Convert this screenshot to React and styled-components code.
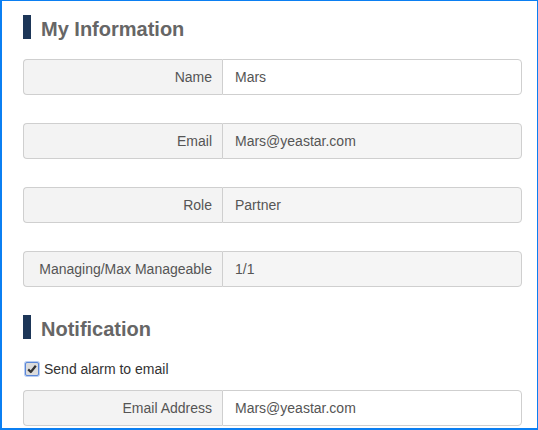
import React from 'react';
import styled, {createGlobalStyle} from 'styled-components';

const GlobalStyle = createGlobalStyle`
    html, body {
        margin: 0;
        padding: 0;
        background: #fff;
    }
    body {
        font-family: "Liberation Sans", Arial, sans-serif;
    }
`

const Frame = styled.div`
    width: 538px;
    height: 430px;
    box-sizing: border-box;
    border: 1px solid #0b7ff2;
    border-left-width: 2px;
    border-bottom-width: 2px;
    padding: 14px 15px 0 21px;
    overflow: hidden;
`

const Section = styled.section`
    display: flex;
    flex-direction: column;
`

const Title = styled.h2`
    display: flex;
    align-items: flex-end;
    gap: 10px;
    height: 24px;
    margin: 0 0 20px;
    font-size: 20px;
    line-height: 20px;
    font-weight: bold;
    color: #666;
    &::before {
        content: '';
        align-self: stretch;
        width: 8px;
        background: #1d3658;
    }
`

const Rows = styled.div`
    display: flex;
    flex-direction: column;
    gap: 28px;
    margin-bottom: 28px;
`

const Field = styled.div`
    display: flex;
    height: 36px;
    font-size: 14px;
    color: #555;
`

const Label = styled.div`
    flex: 0 0 199px;
    box-sizing: border-box;
    display: flex;
    align-items: center;
    justify-content: flex-end;
    padding-right: 10px;
    background: #f3f3f3;
    border: 1px solid #cfcfcf;
    border-right: none;
    border-radius: 4px 0 0 4px;
    white-space: nowrap;
`

const Value = styled.div`
    flex: 1;
    box-sizing: border-box;
    display: flex;
    align-items: center;
    padding-left: 12px;
    background: ${p => (p.disabled ? '#f5f5f5' : '#fff')};
    border: 1px solid #cfcfcf;
    border-radius: 0 4px 4px 0;
`

const Check = styled.label`
    display: flex;
    align-items: center;
    gap: 5px;
    height: 16px;
    margin: 2px 0 13px;
    font-size: 14px;
    color: #333;
`

const Box = styled.span`
    width: 12px;
    height: 12px;
    margin-left: 2px;
    display: flex;
    align-items: center;
    justify-content: center;
    background: #dcdcdc;
    border: 1px solid #5b87d8;
    border-radius: 2px;
    box-shadow: 0 0 0 1px #b8cdf2;
`

const CheckIcon = () => (
    <svg width="10" height="10" viewBox="0 0 10 10">
        <path d="M1.2 5.4 L3.8 8 L8.8 1.8" fill="none" stroke="#333" strokeWidth="2.2" strokeLinejoin="round" />
    </svg>
)

const info = [
    {label: 'Name', value: 'Mars'},
    {label: 'Email', value: 'Mars@yeastar.com', disabled: true},
    {label: 'Role', value: 'Partner', disabled: true},
    {label: 'Managing/Max Manageable', value: '1/1', disabled: true},
]

export default function App() {
    return (
        <>
            <GlobalStyle />
            <Frame>
                <Section>
                    <Title>My Information</Title>
                    <Rows>
                        {info.map(f => (
                            <Field key={f.label}>
                                <Label>{f.label}</Label>
                                <Value disabled={f.disabled}>{f.value}</Value>
                            </Field>
                        ))}
                    </Rows>
                </Section>
                <Section>
                    <Title>Notification</Title>
                    <Check>
                        <Box><CheckIcon /></Box>
                        Send alarm to email
                    </Check>
                    <Field>
                        <Label>Email Address</Label>
                        <Value>Mars@yeastar.com</Value>
                    </Field>
                </Section>
            </Frame>
        </>
    );
}
